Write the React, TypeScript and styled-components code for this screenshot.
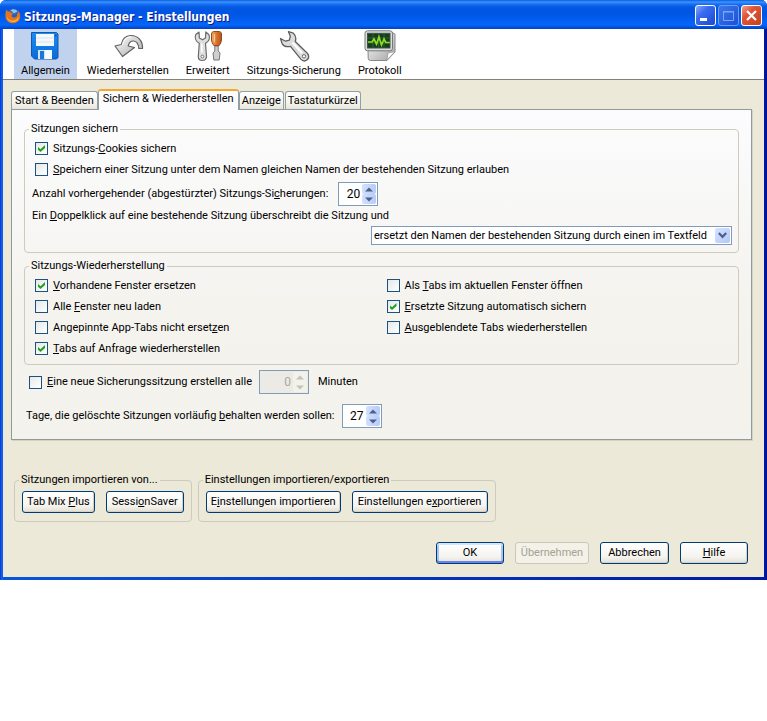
import React from "react";
import styled, { createGlobalStyle, css } from "styled-components";

const GlobalStyle = createGlobalStyle`
  *, *::before, *::after { box-sizing: border-box; }
  body {
    margin: 0;
    background: #fff;
    color: #000;
    font: 11px/14px Roboto, "Liberation Sans", sans-serif;
  }
  button, input, select { font: inherit; color: inherit; margin: 0; }
  u { text-underline-offset: 1px; text-decoration-skip-ink: none; }
`;

const Window = styled.main`
  background: linear-gradient(90deg, #0831d9, #166aee 2px, #0855dd 3px, #0019a8 calc(100% - 3px), #00138c);
  border-radius: 6px 6px 0 0;
  overflow: hidden;
  padding: 0 3px 3px;
`;

const TitleBar = styled.header`
  display: flex;
  align-items: center;
  height: 29px;
  margin: 0 -3px;
  padding: 2px 5px 0;
  background: linear-gradient(
    #0a5be0 0, #3c93ff 2px, #1873f5 4px, #0558e3 7px, #0054e3 13px, #025ff0 20px, #0566fb 25px, #0452dd 27px, #0340c4 29px
  );
`;

const Title = styled.h1`
  flex: 1;
  margin: 0 0 0 3px;
  padding-top: 2px;
  color: #fff;
  font: bold 12px/16px "DejaVu Sans Condensed", "DejaVu Sans", sans-serif;
  text-shadow: 1px 1px 0 #0a1883;
  white-space: nowrap;
`;

const Captions = styled.div`
  display: flex;
  gap: 2px;
`;

const CaptionButton = styled.button<{ $tone?: "close" | "off" }>`
  display: grid;
  place-items: center;
  width: 21px;
  height: 21px;
  padding: 0;
  border: 1px solid ${(p) => (p.$tone === "off" ? "#6d9bf3" : "#fff")};
  border-radius: 3px;
  background: ${(p) =>
    p.$tone === "close"
      ? "linear-gradient(135deg, #f0a088, #e0553a 35%, #c8401c)"
      : p.$tone === "off"
      ? "linear-gradient(135deg, #3b78ea, #1b51d8)"
      : "linear-gradient(135deg, #8aabf8, #3a6cf0 35%, #1c49d2)"};
`;

const Toolbar = styled.nav`
  display: flex;
  gap: 3px;
  padding: 0 11px;
  background: #fff;
  border-bottom: 1px solid #848278;
`;

const Tool = styled.button<{ $active?: boolean }>`
  display: flex;
  flex-direction: column;
  align-items: center;
  height: 50px;
  padding: 1px 7px 0;
  border: 0;
  background: ${(p) => (p.$active ? "#c1d2ee" : "transparent")};
  white-space: nowrap;
  line-height: 17px;
`;

const Content = styled.div`
  padding: 9px 12px 13px 8px;
  background: #ece9d8;
`;

const TabList = styled.div`
  display: flex;
  align-items: flex-end;
  margin-bottom: -1px;
  position: relative;
`;

const Tab = styled.button<{ $active?: boolean }>`
  height: 18px;
  margin-bottom: 1px;
  padding: 0 2px;
  border: 1px solid #91a0a0;
  border-bottom: 0;
  border-radius: 3px 3px 0 0;
  background: linear-gradient(#fff, #f3f2ea 70%, #e6e4da);
  white-space: nowrap;
  &:first-child { padding: 0 3px; }
  & + & { margin-left: 1px; }
  ${(p) =>
    p.$active &&
    css`
      height: 21px;
      padding: 0 4px 3px;
      border-top: 2px solid #f6a72c;
      background: #fcfcfe;
      && { margin: 0 -1px 0 0; }
    `}
`;

const Panel = styled.section`
  padding: 12px 12px 11px;
  border: 1px solid #919b9c;
  background: linear-gradient(#fcfcfe, #f4f3ee 60%, #f3f2ec);
  box-shadow: 1px 1px 0 #d5d2c0;
`;

const Group = styled.fieldset<{ $pad: string }>`
  min-width: 0;
  margin: 0;
  padding: ${(p) => p.$pad};
  border: 1px solid #cdcbbd;
  border-radius: 4px;
  & + & { margin-top: 6px; }
`;

const Legend = styled.legend`
  margin-left: -3px;
  padding: 0 2px;
`;

const CheckLabel = styled.label`
  display: flex;
  align-items: center;
  height: 21px;
  gap: 5px;
  padding-left: 3px;
  white-space: nowrap;
`;

const Check = styled.input.attrs({ type: "checkbox" })`
  appearance: none;
  display: grid;
  place-items: center;
  flex: none;
  width: 13px;
  height: 13px;
  border: 1px solid #1c5180;
  background: linear-gradient(135deg, #e6e8e8, #fff);
  &:checked::before {
    content: "";
    width: 7px;
    height: 7px;
    background: #21a121;
    clip-path: polygon(0 28%, 0 68%, 36% 100%, 100% 42%, 100% 0, 36% 60%);
  }
`;

const Row = styled.div<{ $top?: number }>`
  display: flex;
  align-items: center;
  min-height: 16px;
  margin-top: ${(p) => p.$top ?? 2}px;
  white-space: nowrap;
`;

const OuterRow = styled(Row)`
  padding-left: 2px;
`;

const Unit = styled.span`
  margin-left: 9px;
`;

const Columns = styled.div`
  display: grid;
  grid-template-columns: 1fr 1fr;
`;

const SpinFrame = styled.span<{ $wide?: boolean; $gap: number; $disabled?: boolean }>`
  display: inline-flex;
  align-items: center;
  width: ${(p) => (p.$wide ? 50 : 40)}px;
  height: 24px;
  margin-left: ${(p) => p.$gap}px;
  padding: 1px;
  border: 1px solid #7f9db9;
  background: ${(p) => (p.$disabled ? "#ebeae4" : "#fff")};
  color: ${(p) => (p.$disabled ? "#aca899" : "#000")};
`;

const SpinInput = styled.input`
  flex: 1;
  min-width: 0;
  padding: 0 2px 0 0;
  border: 0;
  background: transparent;
  text-align: right;
  font-size: 12px;
`;

const SpinButtons = styled.span`
  display: flex;
  flex-direction: column;
  width: 14px;
  height: 20px;
`;

const SpinButton = styled.button`
  display: grid;
  place-items: center;
  flex: 1;
  padding: 0;
  border: 0;
  border-radius: 2px;
  background: linear-gradient(90deg, #d3e0fd, #b6cbf9);
  color: #4d6185;
  &:disabled { background: #f2f1ea; color: #c5c3b5; }
`;

const SelectFrame = styled.div`
  display: grid;
  width: 361px;
  max-width: 100%;
  margin: 2px 6px 0 auto;
`;

const Select = styled.select`
  grid-area: 1 / 1;
  appearance: none;
  height: 19px;
  padding: 0 20px 0 2px;
  border: 1px solid #7f9db9;
  border-radius: 0;
  background: #fff;
`;

const SelectArrow = styled.span`
  grid-area: 1 / 1;
  justify-self: end;
  align-self: center;
  display: grid;
  place-items: center;
  width: 15px;
  height: 15px;
  margin-right: 2px;
  border-radius: 2px;
  background: linear-gradient(135deg, #d6e3ff, #b3c8f7);
  pointer-events: none;
`;

const ImportRow = styled.div`
  display: flex;
  gap: 6px;
  margin: 33px 0 0 3px;
  ${Group} { margin-top: 0; }
`;

const ButtonRow = styled.div<{ $end?: boolean }>`
  display: flex;
  gap: 11px;
  ${(p) => p.$end && "justify-content: flex-end; margin: 20px 4px 0 0;"}
`;

const Button = styled.button<{ $width: number; $primary?: boolean }>`
  height: 22px;
  min-width: ${(p) => p.$width}px;
  padding: 0 4px;
  border: 1px solid #003c74;
  border-radius: 3px;
  background: linear-gradient(#fff, #f4f3ee 70%, #e2dfd3);
  box-shadow: ${(p) =>
    p.$primary ? "inset 0 2px 0 #cee7ff, inset 0 -2px 0 #6982ee, inset 0 0 0 2px #a9c4f3" : "inset -1px -1px 0 #d6d0c5"};
  white-space: nowrap;
  &:disabled {
    border-color: #c9c7ba;
    background: #f3f1e8;
    box-shadow: none;
    color: #a5a294;
  }
`;

const Arrow = ({ up }: { up?: boolean }) => (
  <svg width="8" height="5" viewBox="0 0 8 5" aria-hidden="true">
    <path d={up ? "M0 4.5 4 .5 8 4.5z" : "M0 .5 4 4.5 8 .5z"} fill="currentColor" />
  </svg>
);

const FirefoxIcon = () => (
  <svg width="16" height="16" viewBox="0 0 16 16" aria-hidden="true">
    <circle cx="8.3" cy="7.2" r="6.600" fill="#2a62b8" />
    <path d="M5.500 2.200C8 .4 11 1 12.500 3.400L9 5.500z" fill="#8cc4ee" />
    <path
      d="M1.300 1.600 3.200 3.800C4.600 3.200 5.600 3.600 6 4.800L8.200 5.600 6.600 7.200C6.400 9 8 10.200 10 9.600 12 9 12.600 7 12.200 4.400L13.200 5 13 2.800C15.500 5.200 15.800 9 14.600 11.500 13 14.500 10.300 15.600 7 15.200 2.700 14.600.3 11.300.4 7.400.5 5 .8 3.300 1.300 1.600z"
      fill="#e8741c"
    />
    <path d="M2 8.500C2.800 11.600 5.400 13 8.200 12.700 10.800 12.500 12.800 11.200 13.600 8.800 13.900 11.800 11.300 14.100 8.100 13.900 4.600 13.800 2 12 2 8.500z" fill="#fbc04a" />
  </svg>
);

const FloppyIcon = () => (
  <svg width="32" height="32" viewBox="0 0 32 32" aria-hidden="true">
    <defs>
      <linearGradient id="disk" x1="0" y1="0" x2="0" y2="1">
        <stop offset="0" stopColor="#1c8df2" />
        <stop offset="1" stopColor="#0a6ad8" />
      </linearGradient>
    </defs>
    <path d="M2.500 2.500h25l1.500 1.500v23.500l-1.500 1.500H5.500l-3-3z" fill="url(#disk)" stroke="#1257a8" />
    <path d="M7 4h18v12H7z" fill="#f4f8fc" />
    <path d="M7 8h18M7 12h18" stroke="#d9e4ee" />
    <path d="M9 20h14v9H9z" fill="#d5e2f0" />
    <path d="M11 21h4v8h-4z" fill="#1b78d8" />
    <path d="M16 20h7v9h-7z" fill="#f7fafd" />
    <path d="M26 4.500h1.500v2H26z" fill="#0b4fa4" />
  </svg>
);

const RestoreIcon = () => (
  <svg width="32" height="32" viewBox="0 0 32 32" aria-hidden="true">
    <defs>
      <linearGradient id="bend" x1="0" y1="0" x2="1" y2="1">
        <stop offset="0" stopColor="#fff" />
        <stop offset="1" stopColor="#a8a8a8" />
      </linearGradient>
    </defs>
    <path
      d="M30.500 18.500C31 10.500 25.500 5.200 18.500 5.500 13.500 5.700 10.200 9.500 9.200 14.500L3 16l7.500 10.500L22.500 17.500 16.200 16C17 12.500 19 10.800 21.500 11 25 11.300 26.500 14.500 26.800 18.500z"
      fill="url(#bend)"
      stroke="#626262"
      strokeWidth="1.200"
      strokeLinejoin="round"
    />
    <path d="M10.500 15C12 9.500 15 6.800 19 6.800" fill="none" stroke="#fff" />
  </svg>
);

const ToolsIcon = () => (
  <svg width="32" height="32" viewBox="0 0 32 32" aria-hidden="true">
    <defs>
      <linearGradient id="handle" x1="0" y1="0" x2="1" y2="0">
        <stop offset="0" stopColor="#f2ad6c" />
        <stop offset=".5" stopColor="#d9752c" />
        <stop offset="1" stopColor="#b4541a" />
      </linearGradient>
    </defs>
    <path
      d="M7 2 3.800 4.500C2.300 8 4 11.500 7.300 13.200L6.300 26.500c0 2.300 1.700 4 4.100 4s4.200-1.700 4.100-4l-1-13.300C17 11.500 18.300 8 16.800 4.500L13.800 2l-.3 6-3 1.800L7.400 8z"
      fill="#dedede"
      stroke="#6b6b6b"
      strokeWidth="1.200"
      strokeLinejoin="round"
    />
    <path d="M9.800 13.500v9" stroke="#fff" strokeWidth="1.500" />
    <circle cx="10.400" cy="26.600" r="1.400" fill="#fff" stroke="#777" />
    <path d="M22.800 16h3.400v5l1.800 2-.8 7h-5.400l-.8-7 1.800-2z" fill="#cfcfcf" stroke="#777" />
    <path d="M21.500 1.500h6q2 .5 2 2.500v6q-.3 3-2.300 5.500h-5.400Q19.800 13 19.500 10V4q0-2 2-2.500z" fill="url(#handle)" stroke="#9a4a18" />
    <path d="M22.500 4v8" stroke="#f9c594" strokeWidth="1.300" />
  </svg>
);

const WrenchIcon = () => (
  <svg width="32" height="32" viewBox="0 0 32 32" aria-hidden="true">
    <path
      d="M10.500 1.700 15.300 3.200C18 5.500 18.300 8.300 17.300 11.500L29.300 23.300c2 2.300 1.700 5-.2 6.500-1.900 1.600-4.500 1.300-6.300-.7L12.500 16.300c-3 .8-6.400.2-8.300-2.500L2.500 8.500l5 2.700 3.900-1 .9-4z"
      fill="#dcdcdc"
      stroke="#5e5e5e"
      strokeWidth="1.300"
      strokeLinejoin="round"
    />
    <path d="M14.500 12.500 24 23" stroke="#fff" strokeWidth="2" />
    <circle cx="26" cy="26.300" r="1.700" fill="#fff" stroke="#666" />
  </svg>
);

const MonitorIcon = () => (
  <svg width="32" height="32" viewBox="0 0 32 32" aria-hidden="true">
    <defs>
      <linearGradient id="case" x1="0" y1="0" x2="1" y2="1">
        <stop offset="0" stopColor="#fff" />
        <stop offset="1" stopColor="#a2a2a2" />
      </linearGradient>
    </defs>
    <path d="M4 18h24V2.500l3 1.500v18l-8 8.500H6.500q-2 0-2.300-2z" fill="url(#case)" stroke="#888" />
    <path d="M31 21.500l-8 8.500 1-7z" fill="#fff" stroke="#999" strokeWidth=".8" />
    <rect x="1" y=".8" width="27.500" height="20" rx="2.500" fill="#dcdedc" stroke="#777" />
    <rect x="3.500" y="3.300" width="22.500" height="14.700" fill="#173c20" stroke="#3d5442" />
    <path d="M4 8h21.500M4 13h21.500M9 4v13.500M14.500 4v13.500M20 4v13.500" stroke="#35693c" strokeWidth=".8" />
    <path d="M4 12h4l2-3 2.500 5L15 7l2.500 8 2.500-6 1.800 3.500h4" fill="none" stroke="#8be01c" strokeWidth="1.700" />
  </svg>
);

const tools = [
  { label: "Allgemein", icon: <FloppyIcon /> },
  { label: "Wiederherstellen", icon: <RestoreIcon /> },
  { label: "Erweitert", icon: <ToolsIcon /> },
  { label: "Sitzungs-Sicherung", icon: <WrenchIcon /> },
  { label: "Protokoll", icon: <MonitorIcon /> },
];

const tabs = ["Start & Beenden", "Sichern & Wiederherstellen", "Anzeige", "Tastaturkürzel"];

/** Text whose access key, marked by a leading "_", is underlined. */
const Keyed = ({ text }: { text: string }) => {
  const at = text.indexOf("_");
  if (at < 0) return <span>{text}</span>;
  return (
    <span>
      {text.slice(0, at)}
      <u>{text[at + 1]}</u>
      {text.slice(at + 2)}
    </span>
  );
};

const CheckItem = ({ text, checked }: { text: string; checked?: boolean }) => (
  <CheckLabel>
    <Check defaultChecked={checked} />
    <Keyed text={text} />
  </CheckLabel>
);

type SpinnerProps = { id: string; value: number; gap: number; wide?: boolean; disabled?: boolean; label?: string };

const Spinner = ({ id, value, gap, wide, disabled, label }: SpinnerProps) => {
  const [current, setCurrent] = React.useState(value);
  return (
    <SpinFrame $wide={wide} $gap={gap} $disabled={disabled}>
      <SpinInput
        id={id}
        aria-label={label}
        inputMode="numeric"
        value={current}
        disabled={disabled}
        onChange={(e) => setCurrent(Number(e.target.value) || 0)}
      />
      <SpinButtons>
        <SpinButton aria-label="Erhöhen" disabled={disabled} onClick={() => setCurrent(current + 1)}>
          <Arrow up />
        </SpinButton>
        <SpinButton aria-label="Verringern" disabled={disabled} onClick={() => setCurrent(Math.max(0, current - 1))}>
          <Arrow />
        </SpinButton>
      </SpinButtons>
    </SpinFrame>
  );
};

export default function App() {
  return (
    <>
      <GlobalStyle />
      <Window>
        <TitleBar>
          <FirefoxIcon />
          <Title>Sitzungs-Manager - Einstellungen</Title>
          <Captions>
            <CaptionButton aria-label="Minimieren">
              <svg width="19" height="19" viewBox="0 0 19 19">
                <path d="M4 12h7v3H4z" fill="#fff" />
              </svg>
            </CaptionButton>
            <CaptionButton aria-label="Maximieren" $tone="off" disabled>
              <svg width="19" height="19" viewBox="0 0 19 19">
                <path d="M4.500 5.500h10v9h-10zM4 6h11" fill="none" stroke="#7fa6f5" />
              </svg>
            </CaptionButton>
            <CaptionButton aria-label="Schließen" $tone="close">
              <svg width="19" height="19" viewBox="0 0 19 19">
                <path d="M5 5l9 9M14 5l-9 9" stroke="#fff" strokeWidth="2.200" />
              </svg>
            </CaptionButton>
          </Captions>
        </TitleBar>

        <Toolbar>
          {tools.map((tool, i) => (
            <Tool key={tool.label} $active={i === 0}>
              {tool.icon}
              {tool.label}
            </Tool>
          ))}
        </Toolbar>

        <Content>
          <TabList role="tablist">
            {tabs.map((tab, i) => (
              <Tab key={tab} role="tab" aria-selected={i === 1} $active={i === 1}>
                {tab}
              </Tab>
            ))}
          </TabList>

          <Panel role="tabpanel">
            <Group $pad="2px 0 7px 7px">
              <Legend>Sitzungen sichern</Legend>
              <CheckItem text="Sitzungs-_Cookies sichern" checked />
              <CheckItem text="_Speichern einer Sitzung unter dem Namen gleichen Namen der bestehenden Sitzung erlauben" />
              <Row>
                <label htmlFor="backups">
                  <Keyed text="Anzahl vorhergehender (abgestürzter) Sitzungs-Si_cherungen:" />
                </label>
                <Spinner id="backups" value={20} gap={10} />
              </Row>
              <Row>
                <label htmlFor="overwrite">
                  <Keyed text="Ein _Doppelklick auf eine bestehende Sitzung überschreibt die Sitzung und" />
                </label>
              </Row>
              <SelectFrame>
                <Select id="overwrite">
                  <option>ersetzt den Namen der bestehenden Sitzung durch einen im Textfeld</option>
                </Select>
                <SelectArrow>
                  <svg width="9" height="7" viewBox="0 0 9 7" aria-hidden="true">
                    <path d="M.8 1 4.500 4.800 8.200 1" fill="none" stroke="#4d6185" strokeWidth="2.200" />
                  </svg>
                </SelectArrow>
              </SelectFrame>
            </Group>

            <Group $pad="2px 3px 5px 7px">
              <Legend>Sitzungs-Wiederherstellung</Legend>
              <Columns>
                <div>
                  <CheckItem text="_Vorhandene Fenster ersetzen" checked />
                  <CheckItem text="Alle _Fenster neu laden" />
                  <CheckItem text="Angepinnte App-Tabs nicht erset_zen" />
                  <CheckItem text="_Tabs auf Anfrage wiederherstellen" checked />
                </div>
                <div>
                  <CheckItem text="Als _Tabs im aktuellen Fenster öffnen" />
                  <CheckItem text="_Ersetzte Sitzung automatisch sichern" checked />
                  <CheckItem text="_Ausgeblendete Tabs wiederherstellen" />
                </div>
              </Columns>
            </Group>

            <OuterRow $top={5}>
              <CheckItem text="_Eine neue Sicherungssitzung erstellen alle" />
              <Spinner id="interval" value={0} gap={7} wide disabled label="Minuten" />
              <Unit>Minuten</Unit>
            </OuterRow>
            <OuterRow $top={10}>
              <label htmlFor="days">
                <Keyed text="Tage, die gelöschte Sitzungen vorläufig _behalten werden sollen:" />
              </label>
              <Spinner id="days" value={27} gap={7} />
            </OuterRow>
          </Panel>

          <ImportRow>
            <Group $pad="4px 7px 8px">
              <Legend>Sitzungen importieren von...</Legend>
              <ButtonRow>
                <Button $width={72}>
                  <Keyed text="Tab Mix _Plus" />
                </Button>
                <Button $width={78}>
                  <Keyed text="Sessi_onSaver" />
                </Button>
              </ButtonRow>
            </Group>
            <Group $pad="4px 7px 8px">
              <Legend>Einstellungen importieren/exportieren</Legend>
              <ButtonRow>
                <Button $width={134}>
                  <Keyed text="E_instellungen importieren" />
                </Button>
                <Button $width={136}>
                  <Keyed text="Einstellungen e_xportieren" />
                </Button>
              </ButtonRow>
            </Group>
          </ImportRow>

          <ButtonRow $end>
            <Button $width={68} $primary>
              OK
            </Button>
            <Button $width={74} disabled>
              Übernehmen
            </Button>
            <Button $width={69}>Abbrechen</Button>
            <Button $width={68}>
              <Keyed text="_Hilfe" />
            </Button>
          </ButtonRow>
        </Content>
      </Window>
    </>
  );
}
